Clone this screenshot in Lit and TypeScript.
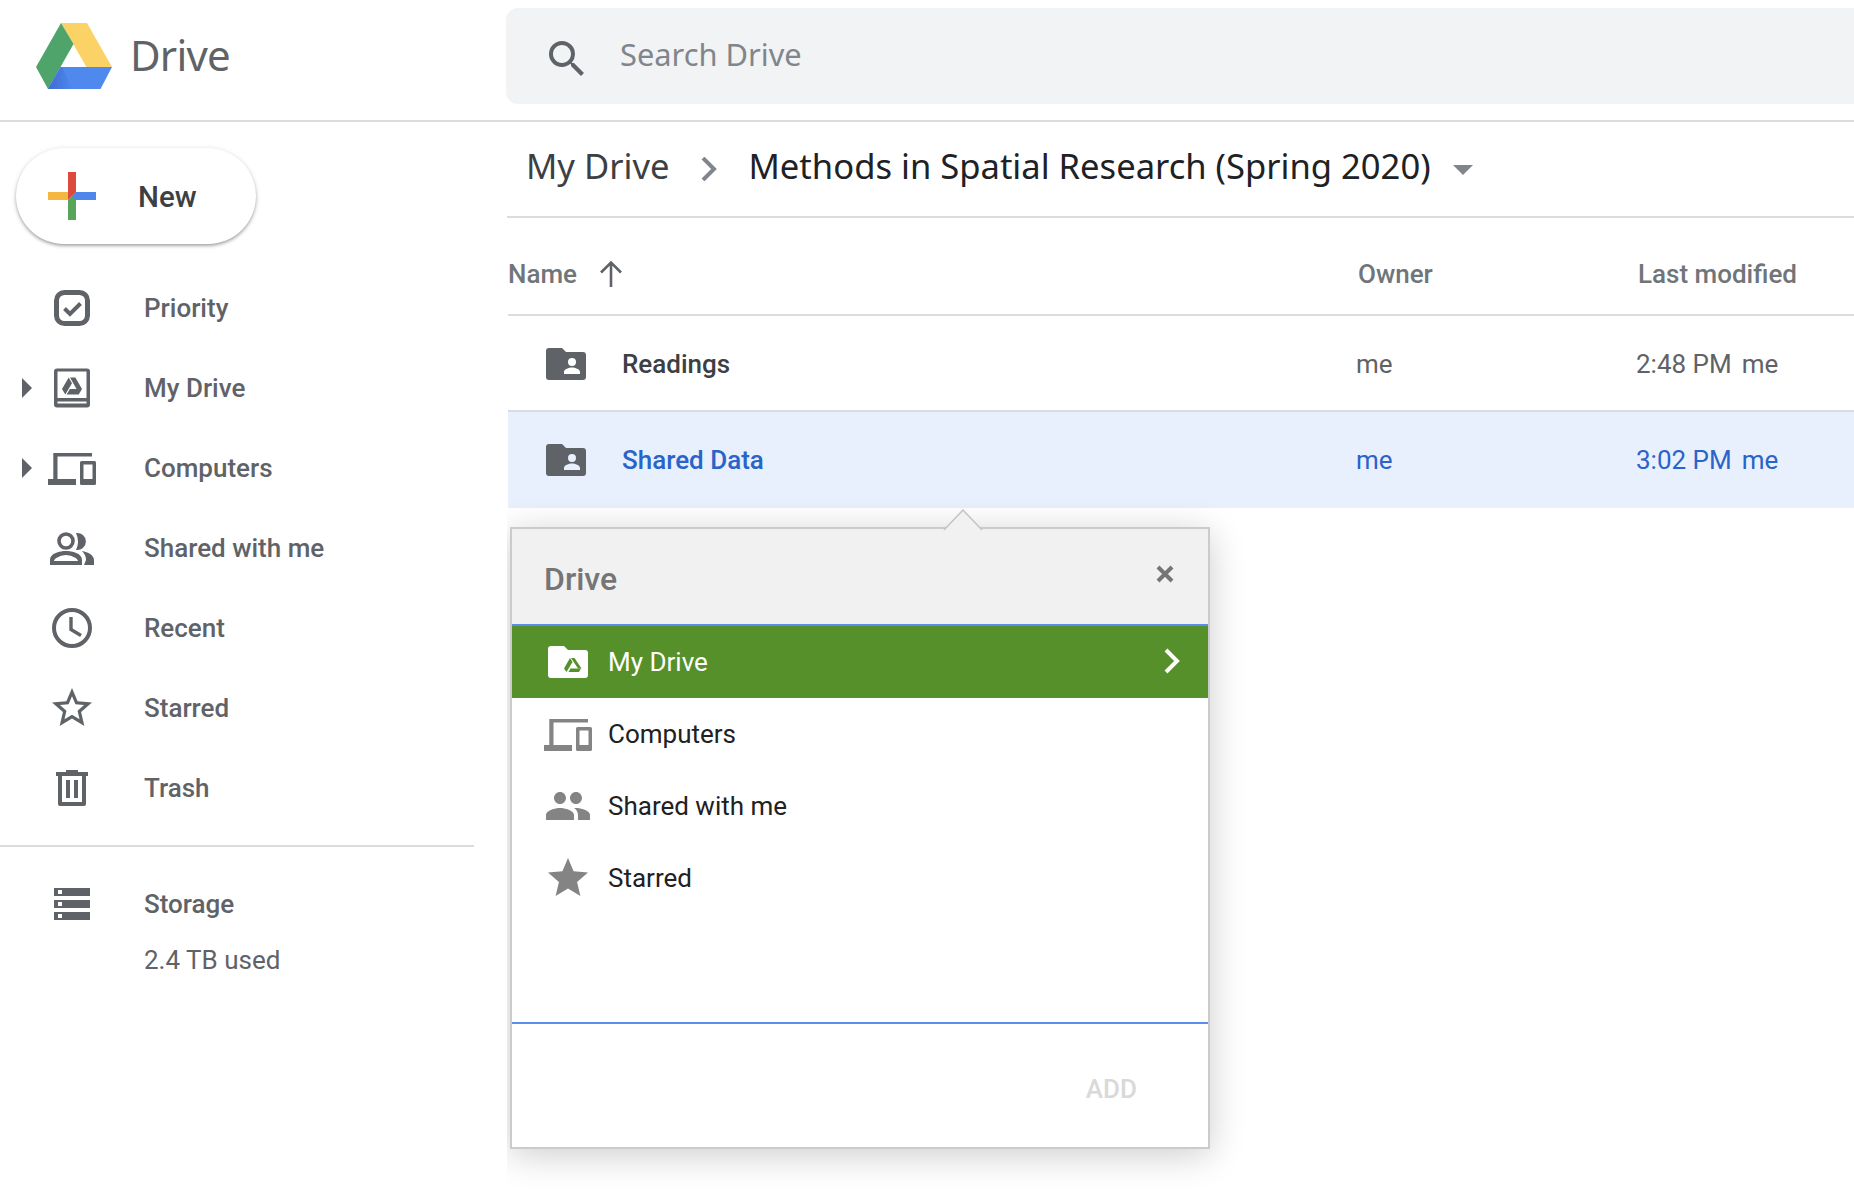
import { LitElement, html, css } from 'lit'
import { customElement } from 'lit/decorators.js'

const ICONS: Record<string, ReturnType<typeof html>> = {
	priority: html`<svg viewBox="0 0 48 48"><rect x="8.5" y="8.5" width="31" height="31" rx="8" fill="none" stroke="currentColor" stroke-width="5"/><path d="M16.5 24.5l5.5 5.5 10.5-10.5" fill="none" stroke="currentColor" stroke-width="4"/></svg>`,
	drive: html`<svg viewBox="0 0 48 48"><path fill-rule="evenodd" fill="currentColor" d="M9 4.5h30a3 3 0 0 1 3 3v33a3 3 0 0 1-3 3H9a3 3 0 0 1-3-3v-33a3 3 0 0 1 3-3zM9.5 7.5V34h29V7.5zM9.5 37.5v2h29v-2z"/><g transform="translate(14 13.5)" fill="currentColor"><path d="M6.7 0L0 11.5 3.3 17 10 5.7z"/><path d="M8 0h5.4L20 11.5h-5.5z"/><path d="M4.6 17l3.3-5.5H20L16.7 17z"/></g></svg>`,
	computers: html`<svg viewBox="0 0 48 48"><path fill="currentColor" fill-rule="evenodd" d="M5.3 9H44v3.5H9.5V35H28v6H0v-6h5.3zM33.5 17h13a1.5 1.5 0 0 1 1.5 1.5v21a1.5 1.5 0 0 1-1.5 1.5h-13a1.5 1.5 0 0 1-1.5-1.5v-21a1.5 1.5 0 0 1 1.5-1.5zM35.5 20.500V35h9V20.500z"/></svg>`,
	shared: html`<svg viewBox="0 0 48 48"><circle cx="18" cy="17" r="7" fill="none" stroke="currentColor" stroke-width="3.6"/><path fill="currentColor" fill-rule="evenodd" d="M2 41v-5c0-7 10-9 16-9s16 2 16 9v5zM6 37h24c0-3-8-6-12-6s-12 3-12 6z"/><path fill="currentColor" d="M28 9A8.6 8.6 0 1 1 28 26 20 20 0 0 0 28 9zM36 41h10v-5c0-5-6-8-12-9 3 3 4 6 4 9z"/></svg>`,
	recent: html`<svg viewBox="0 0 48 48"><circle cx="24" cy="24" r="18" fill="none" stroke="currentColor" stroke-width="4"/><path d="M23 13v12.500l10 6" fill="none" stroke="currentColor" stroke-width="3.400"/></svg>`,
	starred: html`<svg viewBox="0 0 24 24"><path fill="currentColor" d="M22 9.240l-7.190-.62L12 2 9.190 8.630 2 9.240l5.460 4.730L5.820 21 12 17.270 18.180 21l-1.630-7.030L22 9.240zM12 15.400l-3.760 2.270 1-4.280-3.320-2.880 4.380-.38L12 6.100l1.710 4.040 4.380.38-3.320 2.880 1 4.280L12 15.400z"/></svg>`,
	trash: html`<svg viewBox="0 0 48 48"><path fill="currentColor" fill-rule="evenodd" d="M18 6h12v2h10v4h-2v28a2 2 0 0 1-2 2H12a2 2 0 0 1-2-2V12H8V8h10zM14 12v26h20V12zM18 16h4v18h-4zM26 16h4v18h-4z"/></svg>`,
	storage: html`<svg viewBox="0 0 48 48"><path fill="currentColor" fill-rule="evenodd" d="M6 8h36v8H6zM10 10v4h4v-4zM6 20h36v8H6zM10 22v4h4v-4zM6 32h36v8H6zM10 34v4h4v-4z"/></svg>`,
	peopleSolid: html`<svg viewBox="0 0 24 24"><path fill="currentColor" d="M16 11c1.660 0 2.990-1.340 2.990-3S17.660 5 16 5c-1.660 0-3 1.340-3 3s1.340 3 3 3zm-8 0c1.660 0 2.990-1.340 2.990-3S9.660 5 8 5C6.340 5 5 6.340 5 8s1.340 3 3 3zm0 2c-2.330 0-7 1.170-7 3.500V19h14v-2.500c0-2.330-4.670-3.500-7-3.500zm8 0c-.29 0-.62.02-.97.05 1.160.84 1.970 1.970 1.970 3.450V19h6v-2.500c0-2.330-4.670-3.500-7-3.500z"/></svg>`,
	starSolid: html`<svg viewBox="0 0 24 24"><path fill="currentColor" d="M12 17.270L18.180 21l-1.640-7.030L22 9.240l-7.190-.61L12 2 9.190 8.630 2 9.240l5.460 4.730L5.820 21z"/></svg>`,
}

const folderShared = html`<svg class="folder" viewBox="0 0 40 32"><path fill="currentColor" fill-rule="evenodd" d="M3 0h13l4 4h17a3 3 0 0 1 3 3v22a3 3 0 0 1-3 3H3a3 3 0 0 1-3-3V3a3 3 0 0 1 3-3zM26 10a4 4 0 1 0 0 8 4 4 0 0 0 0-8zM18 26h16v-2c0-3-5-4.500-8-4.500s-8 1.500-8 4.500z"/></svg>`

const NAV = [
	{ label: 'Priority', icon: 'priority', caret: false },
	{ label: 'My Drive', icon: 'drive', caret: true },
	{ label: 'Computers', icon: 'computers', caret: true },
	{ label: 'Shared with me', icon: 'shared', caret: false },
	{ label: 'Recent', icon: 'recent', caret: false },
	{ label: 'Starred', icon: 'starred', caret: false },
	{ label: 'Trash', icon: 'trash', caret: false },
]

const FILES = [
	{ name: 'Readings', time: '2:48 PM', selected: false },
	{ name: 'Shared Data', time: '3:02 PM', selected: true },
]

@customElement('app-root')
export class AppRoot extends LitElement {
	static styles = css`
		:host {
			display: block;
			height: 100vh;
			overflow: hidden;
			background: #fff;
			font-family: Roboto, "Liberation Sans", sans-serif;
			color: #5f6368;
		}

		* {
			box-sizing: border-box;
			margin: 0;
		}

		svg {
			display: block;
			flex: none;
		}

		.top {
			display: flex;
			height: 122px;
			padding-top: 8px;
			border-bottom: 2px solid #dadce0;
		}

		.brand {
			display: flex;
			width: 506px;
			flex: none;
			padding: 0 0 4px 36px;
			height: 96px;
			align-items: center;
			gap: 18px;
			font-family: "Noto Sans", sans-serif;
			font-size: 42px;
			letter-spacing: -0.8px;
			color: #5f6368;
		}

		.logo {
			width: 76px;
			height: 66px;
			margin-top: 4px;
		}

		.search {
			flex: 1;
			height: 96px;
			display: flex;
			align-items: center;
			background: #f1f3f4;
			border-radius: 12px 0 0 12px;
			padding-left: 37px;
			gap: 29px;
			font-family: "Noto Sans", sans-serif;
			font-size: 30.800px;
			color: #80868b;
		}

		.search span {
			margin-top: -4px;
		}

		.search svg {
			width: 48px;
			height: 48px;
			margin-top: 6px;
			color: #5f6368;
		}

		.body {
			display: flex;
			height: 1074px;
		}

		.side {
			width: 507px;
			flex: none;
			padding-top: 26px;
		}

		.new {
			display: flex;
			align-items: center;
			gap: 42px;
			width: 240px;
			height: 96px;
			margin-left: 16px;
			padding: 2px 0 0 32px;
			border-radius: 48px;
			background: #fff;
			box-shadow: 0 2px 3px rgba(60, 64, 67, 0.35), 0 1px 5px rgba(60, 64, 67, 0.18);
			font-size: 29.500px;
			font-weight: 500;
			color: #3c4043;
		}

		.new svg {
			width: 48px;
			height: 48px;
			margin-top: -2px;
		}

		nav {
			margin-top: 24px;
		}

		.item {
			display: flex;
			align-items: center;
			height: 80px;
			padding-left: 22px;
			font-size: 26px;
			font-weight: 500;
			color: #5f6368;
		}

		.caret {
			width: 26px;
			flex: none;
		}

		.caret i {
			display: block;
			width: 0;
			height: 0;
			border-style: solid;
			border-width: 10px 0 10px 10px;
			border-color: transparent transparent transparent #5f6368;
		}

		.item svg {
			width: 48px;
			height: 48px;
			margin-right: 48px;
		}

		.rule {
			width: 474px;
			height: 2px;
			margin: 17px 0;
			background: #dadce0;
		}

		.used {
			padding-left: 144px;
			font-size: 26px;
			line-height: 30px;
			margin-top: 1px;
			color: #5f6368;
		}

		main {
			position: relative;
			flex: 1;
			overflow: hidden;
		}

		.crumbs {
			display: flex;
			align-items: center;
			height: 96px;
			padding: 0 0 7px 19px;
			border-bottom: 2px solid #dadce0;
			font-family: "Noto Sans", sans-serif;
			font-size: 34.600px;
			color: #3c4043;
		}

		.crumbs .sep {
			width: 16px;
			height: 24px;
			margin: 7px 32px 0 31px;
		}

		.crumbs b {
			font-weight: 400;
			color: #202124;
		}

		.crumbs .drop {
			width: 0;
			height: 0;
			margin: 9px 0 0 22px;
			border-style: solid;
			border-width: 10px 10px 0 10px;
			border-color: #80868b transparent transparent transparent;
		}

		.cols {
			display: grid;
			align-items: center;
			margin-left: 1px;
			border-bottom: 2px solid #dadce0;
		}

		.head {
			grid-template-columns: 850px 280px 1fr;
			height: 98px;
			padding-top: 16px;
			font-size: 26px;
			font-weight: 500;
			color: #70757a;
		}

		.head .name {
			display: flex;
			align-items: center;
			gap: 22px;
		}

		.head svg {
			width: 24px;
			height: 28px;
		}

		.row {
			grid-template-columns: 848px 280px 1fr;
			height: 96px;
			padding-top: 2px;
			font-size: 26px;
			color: #5f6368;
		}

		.row .name {
			display: flex;
			align-items: center;
			gap: 36px;
			padding-left: 38px;
			font-weight: 500;
			color: #3c4043;
		}

		.row .folder {
			width: 40px;
			height: 32px;
			color: #5f6368;
		}

		.row .when {
			display: flex;
			gap: 10px;
		}

		.row.on {
			padding-top: 0;
			background: #e8f0fe;
			border-bottom: 0;
			color: #2a63c9;
		}

		.row.on .name {
			color: #2a63c9;
		}

		.dialog {
			position: absolute;
			left: 3px;
			top: 405px;
			width: 700px;
			height: 622px;
			display: flex;
			flex-direction: column;
			background: #fff;
			border: 2px solid #cbcbcb;
			box-shadow: 0 6px 34px rgba(0, 0, 0, 0.2);
		}

		.tip {
			position: absolute;
			left: 431px;
			top: -20px;
			width: 40px;
			height: 22px;
		}

		.dhead {
			display: flex;
			justify-content: space-between;
			align-items: center;
			height: 97px;
			padding: 5px 34px 0 32px;
			background: #f1f1f1;
			border-bottom: 2px solid #5b8def;
			font-size: 32px;
			font-weight: 500;
			color: #757575;
		}

		.dhead svg {
			width: 18px;
			height: 18px;
			margin-top: -10px;
		}

		.choice {
			display: flex;
			align-items: center;
			height: 72px;
			padding-left: 32px;
			gap: 16px;
			font-size: 26px;
			color: #212121;
		}

		.choice svg {
			width: 48px;
			height: 48px;
			color: #848484;
		}

		.choice.on {
			background: #55902a;
			color: #fff;
		}

		.choice.on .mine {
			width: 40px;
			height: 32px;
			margin: 0 4px;
			color: #fff;
		}

		.choice.on .next {
			width: 16px;
			height: 26px;
			margin: -2px 28px 0 auto;
			color: #fff;
		}

		.list {
			flex: 1;
		}

		.dfoot {
			display: flex;
			justify-content: flex-end;
			align-items: center;
			height: 125px;
			padding: 6px 71px 0 0;
			border-top: 2px solid #5b8def;
			font-size: 26px;
			font-weight: 500;
			color: #d9d9d9;
		}
	`

	render() {
		return html`
			<div class="top">
				<div class="brand">
					<svg class="logo" viewBox="36 23 76 66">
						<defs>
							<linearGradient id="shade" x1="0" y1="0" x2="1" y2="0">
								<stop offset="0" stop-color="#3f6bd3"/>
								<stop offset="1" stop-color="#4f89ee"/>
							</linearGradient>
						</defs>
						<path fill="#fbd265" d="M61 23h26l25 44H86.500z"/>
						<path fill="#4ea46a" d="M61 23L36 67l12 22 25.500-45z"/>
						<path fill="#4f89ee" d="M60.500 67H112l-11.500 22H48z"/>
						<path fill="url(#shade)" d="M60.500 67H62L73 89H48z"/>
					</svg>
					<span>Drive</span>
				</div>
				<div class="search">
					<svg viewBox="0 0 24 24"><path fill="currentColor" d="M15.500 14h-.79l-.28-.27A6.470 6.470 0 0 0 16 9.500 6.500 6.500 0 1 0 9.500 16c1.610 0 3.090-.59 4.230-1.570l.27.28v.79l5 4.990L20.490 19l-4.990-5zm-6 0C7.010 14 5 11.990 5 9.500S7.010 5 9.500 5 14 7.010 14 9.500 11.990 14 9.500 14z"/></svg>
					<span>Search Drive</span>
				</div>
			</div>
			<div class="body">
				<aside class="side">
					<div class="new">
						<svg viewBox="0 0 48 48">
							<path fill="#db4a3d" d="M20 0h8v20l-4 4-4-4z"/>
							<path fill="#4f86ec" d="M24 24l4-4h20v8H24z"/>
							<path fill="#57a55a" d="M20 28l4-4 4 4v20h-8z"/>
							<path fill="#f4b73f" d="M0 20h20l4 4-4 4H0z"/>
							<path fill="#db4a3d" d="M20 20h8l-4 4-4 4z"/>
						</svg>
						<span>New</span>
					</div>
					<nav>
						${NAV.map(n => html`<div class="item">
							<span class="caret">${n.caret ? html`<i></i>` : ''}</span>
							${ICONS[n.icon]}
							<span>${n.label}</span>
						</div>`)}
					</nav>
					<div class="rule"></div>
					<div class="item"><span class="caret"></span>${ICONS.storage}<span>Storage</span></div>
					<div class="used">2.4 TB used</div>
				</aside>
				<main>
					<div class="crumbs">
						<span>My Drive</span>
						<svg class="sep" viewBox="0 0 16 24"><path d="M2 1l11 11L2 23" fill="none" stroke="#80868b" stroke-width="4"/></svg>
						<b>Methods in Spatial Research (Spring 2020)</b>
						<span class="drop"></span>
					</div>
					<div class="cols head">
						<div class="name">
							<span>Name</span>
							<svg viewBox="0 0 24 28"><path d="M12 27V3M2 12.500L12 2.500l10 10" fill="none" stroke="#5f6368" stroke-width="2.600"/></svg>
						</div>
						<div>Owner</div>
						<div>Last modified</div>
					</div>
					${FILES.map(f => html`<div class="cols row ${f.selected ? 'on' : ''}">
						<div class="name">${folderShared}<span>${f.name}</span></div>
						<div>me</div>
						<div class="when"><span>${f.time}</span><span>me</span></div>
					</div>`)}
					<section class="dialog">
						<svg class="tip" viewBox="0 0 40 22"><path d="M1 21L20 1l19 20" fill="#f1f1f1" stroke="#c4c4c4" stroke-width="1.500"/></svg>
						<div class="dhead">
							<span>Drive</span>
							<svg viewBox="0 0 18 18"><path d="M2 2l14 14M16 2L2 16" fill="none" stroke="#757575" stroke-width="4"/></svg>
						</div>
						<div class="list">
							<div class="choice on">
								<svg class="mine" viewBox="0 0 40 32"><path fill="currentColor" d="M3 0h13l4 4h17a3 3 0 0 1 3 3v22a3 3 0 0 1-3 3H3a3 3 0 0 1-3-3V3a3 3 0 0 1 3-3z"/><g transform="translate(16 12)" fill="#55902a"><path d="M6 0L0 10.500 2.500 14 8.500 4z"/><path d="M7 0h3.500l7 10.500h-3.500z"/><path d="M4.500 14l2-3.500H17L15 14z"/></g></svg>
								<span>My Drive</span>
								<svg class="next" viewBox="0 0 16 26"><path d="M2 2l11 11L2 24" fill="none" stroke="currentColor" stroke-width="4"/></svg>
							</div>
							<div class="choice">${ICONS.computers}<span>Computers</span></div>
							<div class="choice">${ICONS.peopleSolid}<span>Shared with me</span></div>
							<div class="choice">${ICONS.starSolid}<span>Starred</span></div>
						</div>
						<div class="dfoot">ADD</div>
					</section>
				</main>
			</div>
		`
	}
}
